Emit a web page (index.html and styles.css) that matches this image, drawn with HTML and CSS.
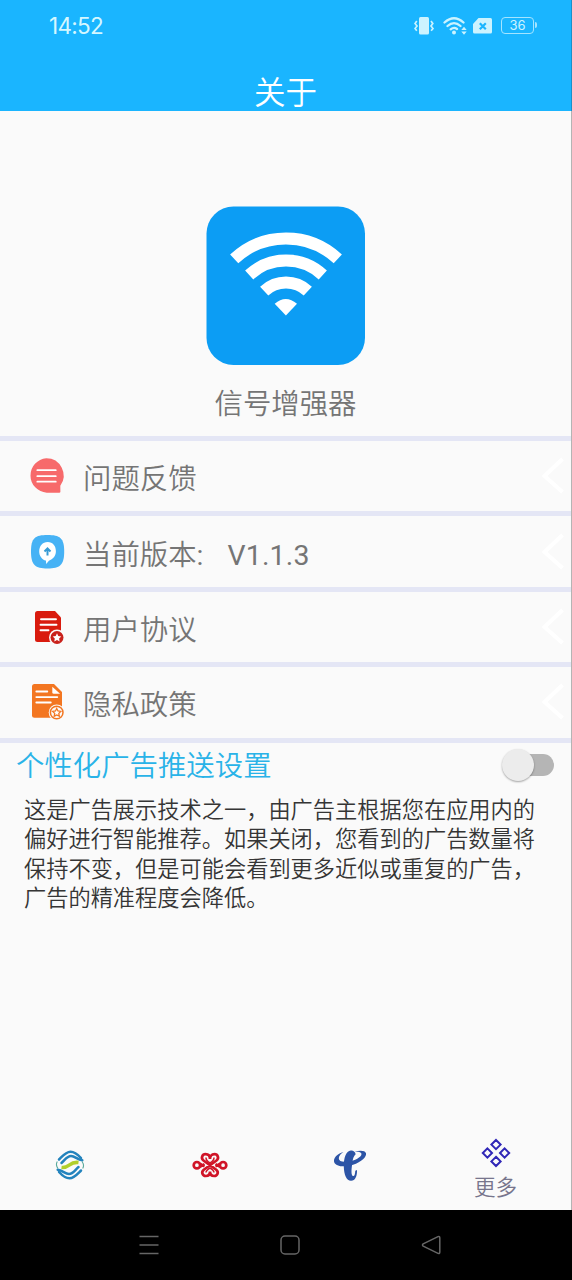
FILE: index.html
```html
<!DOCTYPE html>
<html lang="zh-CN">
<head>
<meta charset="utf-8">
<title>关于</title>
<link rel="stylesheet" href="styles.css">
</head>
<body>
<div class="screen">
  <header class="header">
    <div class="status">
      <span class="time">14:52</span>
      <div class="status-icons">
        <svg class="vibrate" width="20" height="18" viewBox="0 0 20 18"><rect x="5" y="0" width="10" height="17.500" rx="1.500" fill="currentColor"/><path d="M2.800 4 1 6.500 3 9 1 11.500l1.800 2.200M17 4l1.800 2.500L17 9l2 2.500-1.900 2.200" fill="none" stroke="currentColor" stroke-width="1.700"/></svg>
        <svg class="wifi" width="24" height="18" viewBox="0 0 24 18"><g fill="none" stroke="currentColor" stroke-width="2.300" stroke-linecap="round"><path d="M1.500 5.500Q11 -3 20.500 5.500M4.500 9Q11 3.200 17.500 9M7.700 12.300Q11 9.500 14 12"/></g><circle cx="11" cy="15.500" r="2" fill="currentColor"/><path d="M18.300 13 21 9.800l2.700 3.200ZM18.300 14.500 21 17.700l2.700-3.200Z" fill="currentColor"/></svg>
        <svg class="sim" width="19" height="16" viewBox="0 0 19 16"><path d="M5.500 0H17.500Q19 0 19 1.500V14Q19 15.500 17.500 15.500H1.500Q0 15.500 0 14V6Z" fill="currentColor"/><path d="m6.800 5.200 6 6m0-6-6 6" stroke="#1ab5ff" stroke-width="2.200"/></svg>
        <div class="battery">36</div>
      </div>
    </div>
    <h1 class="title">关于</h1>
  </header>

  <main class="content">
    <section class="hero">
      <svg class="app-logo" width="160" height="160" viewBox="0 0 160 160">
        <rect x=".5" y=".5" width="158.500" height="158.500" rx="27" fill="#0c9df4"/>
        <g fill="none" stroke="#fff" stroke-width="12"><path d="M28.200 52.900A76 76 0 0 1 131.800 52.900M43.200 69A54 54 0 0 1 116.800 69M58.200 85.100A32 32 0 0 1 101.800 85.100"/></g>
        <path d="M68.700 97.800Q79.700 88 91 97.800L79.900 109.500Z" fill="#fff"/>
      </svg>
      <div class="app-name">信号增强器</div>
    </section>

    <ul class="menu">
      <li class="row">
        <svg class="row-icon" width="40" height="40" viewBox="0 0 40 40"><path d="M19.600 2.500a17.300 17.300 0 0 1 14 27.500l.1 6Q33.700 37 32.500 37L20 37a17.300 17.300 0 0 1-.4-34.500Z" transform="translate(-.3 -.3)" fill="#f76a6b"/><path d="M10.300 14.200h18.500M10.300 20.200h18.500M10.300 25.700h18.500" stroke="#fff" stroke-width="1.700" stroke-linecap="round"/></svg>
        <span class="row-text">问题反馈</span>
        <svg class="chevron" width="26" height="40" viewBox="0 0 26 40"><path d="M22.500 3 4.500 20l18 16" fill="none" stroke="#fff" stroke-width="4"/></svg>
      </li>
      <li class="row">
        <svg class="row-icon" width="40" height="40" viewBox="0 0 40 40"><path d="M20.500 3C33 3 37.200 6 37.200 19.500S33 36.500 20.500 36.500 4 33 4 19.500 8 3 20.500 3Z" fill="#46b2f5"/><path d="M20.700 10c5.200 0 8.200 4 8.200 9.300 0 4.500-3 8.200-7 9.400L19.200 32l-.3-3.400c-4-1-6.700-4.800-6.700-9.200C12.200 14 15.500 10 20.700 10Z" fill="#fff"/><path d="M20.500 16.800v6.700M17.500 19.500l3-3 3 3" stroke="#379bd5" stroke-width="2" fill="none"/></svg>
        <span class="row-text">当前版本<span class="latin">:</span></span><span class="row-text latin version">V1.1.3</span>
        <svg class="chevron" width="26" height="40" viewBox="0 0 26 40"><path d="M22.500 3 4.500 20l18 16" fill="none" stroke="#fff" stroke-width="4"/></svg>
      </li>
      <li class="row">
        <svg class="row-icon" width="40" height="40" viewBox="0 0 40 40"><path d="M10.500 4H28l6 6.500V35H10.500Q8 35 8 32.500v-26Q8 4 10.500 4Z" fill="#d91b0e"/><path d="M14 12.200h15M13.500 17.700h16M13.500 23.300h8" stroke="#fff" stroke-width="1.900" stroke-linecap="round"/><circle cx="30" cy="30.500" r="8" fill="#fafafa"/><circle cx="30" cy="30.500" r="6.500" fill="#c9211b"/><path d="m30 26.300 1.300 2.700 3 .4-2.200 2.100.5 3-2.600-1.400-2.700 1.400.5-3-2.100-2.100 3-.4Z" fill="#fff"/></svg>
        <span class="row-text">用户协议</span>
        <svg class="chevron" width="26" height="40" viewBox="0 0 26 40"><path d="M22.500 3 4.500 20l18 16" fill="none" stroke="#fff" stroke-width="4"/></svg>
      </li>
      <li class="row">
        <svg class="row-icon" width="40" height="40" viewBox="0 0 40 40"><path d="M7.500 2H27l8 8v25.800H7.500Q5 35.800 5 33.300V4.500Q5 2 7.500 2Z" fill="#f37621"/><path d="M25.300 4.800v5.500q0 1.500 1.500 1.500h6.300Z" fill="#fff"/><path d="M9.300 9.500h11M9.300 15.100h21M9.300 20.500h14.500" stroke="#fff" stroke-width="1.800" stroke-linecap="round"/><circle cx="29.700" cy="30.500" r="8" fill="#fafafa"/><circle cx="29.700" cy="30.500" r="6.300" fill="none" stroke="#f37621" stroke-width="1.500"/><path d="m29.700 26.500 1.300 2.500 2.800.4-2 2 .5 2.800-2.600-1.300-2.500 1.300.5-2.800-2-2 2.800-.4Z" fill="#fff" stroke="#f37621" stroke-width="1.300"/></svg>
        <span class="row-text">隐私政策</span>
        <svg class="chevron" width="26" height="40" viewBox="0 0 26 40"><path d="M22.500 3 4.500 20l18 16" fill="none" stroke="#fff" stroke-width="4"/></svg>
      </li>
    </ul>

    <section class="ads">
      <div class="ads-head">
        <h2 class="ads-title">个性化广告推送设置</h2>
        <div class="switch"><div class="thumb"></div></div>
      </div>
      <p class="ads-text">这是广告展示技术之一，由广告主根据您在应用内的<br>偏好进行智能推荐。如果关闭，您看到的广告数量将<br>保持不变，但是可能会看到更多近似或重复的广告，<br>广告的精准程度会降低。</p>
    </section>

    <nav class="tabs">
      <div class="tab">
        <svg width="32" height="32" viewBox="0 0 32 32">
          <defs>
            <g id="wave" fill="none" stroke="#2383bd" stroke-linecap="round">
              <path d="M5 10.500C9 6.500 12 2.700 16.500 2.700c4 0 7.500 3 10.500 6.300" stroke-width="2.500"/>
              <path d="M7.500 14C11 11 13 7 17 7c4 0 6 3.500 11.300 4.300" stroke-width="2.500"/>
            </g>
          </defs>
          <use href="#wave"/>
          <use href="#wave" transform="rotate(180 16 16)"/>
          <path d="M7.500 18.500C15.500 19.500 15 12.300 24.500 13.500" fill="none" stroke="#b1cf2c" stroke-width="3.600"/>
          <path d="M3.300 12.500c-1.500 2.500-.8 5 .7 7M28.700 19.500c1.500-2.500.8-5-.7-7" fill="none" stroke="#5aaa9c" stroke-width="1.100"/>
        </svg>
      </div>
      <div class="tab">
        <svg width="36" height="28" viewBox="0 0 36 28"><g fill="none" stroke="#d01427" stroke-width="2.700"><circle cx="4.900" cy="14.200" r="3.200"/><circle cx="31.100" cy="14.200" r="3.200"/><path d="M18 14.200 11.500 9.500C8.500 7 10.300 3.200 13.500 3.200c3 0 4.500 2 4.500 4.800 0-2.800 1.500-4.800 4.500-4.800 3.200 0 5 3.800 2 6.300L11.800 18.700c-3 2.500-1.200 6.300 2 6.300 2.700 0 4.200-2 4.200-4.500 0 2.500 1.500 4.500 4.200 4.500 3.200 0 5-3.800 2-6.300Z"/><path d="m8 12.500 4.500 3M8 16l4.500-3M28 12.500l-4.500 3M28 16l-4.500-3" stroke-width="2.300"/><path d="M14 6.500q-.2 3 4 5.500 4.200-2.500 4-5.500M14 21.500q0-2 4-4.500 4 2.500 4 4.500" stroke-width="1.500"/></g></svg>
      </div>
      <div class="tab">
        <svg width="34" height="33" viewBox="0 0 34 33"><path d="M10.500 3C4 4.500 0 9.500 1.200 13.200c1.700 4.500 10.500 5.300 18.800 2.600C28.500 13 34 7.500 33 4.200 32.200 1.300 27 1 21.500 2.700c4-.2 7 .3 7 2.300 0 3.300-7 6.700-13 7.500-6 .8-9.700 0-9.700-3.200 0-2.300 2.200-4.800 4.700-6.300Z" fill="#2c54a6"/><path d="M22.700 5.300C22 2.500 20 1.300 17.800 1.600 13 2 10.600 9 10.800 17.500 11 26 13.500 31.700 18 31.800c4.200.1 6.300-5 6-10.800l-1.700.7c-.3 3.600-.8 5.600-2.200 5.300-2-.4-1.800-5.700-1-11.500C19.700 10 20.500 7.500 22.700 5.300Z" fill="#2c54a6"/></svg>
      </div>
      <div class="tab active">
        <svg width="30" height="30" viewBox="0 0 30 30"><path d="m15 2 4.600 4.600L15 11.200l-4.600-4.600ZM6.400 10.400 11 15l-4.600 4.600L1.800 15ZM23.600 10.400l4.600 4.600-4.600 4.600L19 15ZM15 18.800l4.600 4.600L15 28l-4.600-4.600Z" fill="none" stroke="#3027b7" stroke-width="2"/></svg>
        <span class="tab-label">更多</span>
      </div>
    </nav>
  </main>

  <footer class="system-nav">
    <svg width="20" height="22" viewBox="0 0 20 22"><path d="M.5 2.500h19M.5 11h19M.5 19.500h19"/></svg>
    <svg width="20" height="22" viewBox="0 0 20 22"><rect x="1" y="2" width="18" height="18" rx="4"/></svg>
    <svg width="20" height="22" viewBox="0 0 20 22"><path d="M17 2.600 2.200 9.900Q.8 11 2.200 12.100L17 19.400q1.800.5 1.800-1.400V4q0-1.900-1.800-1.400Z"/></svg>
  </footer>
</div>
</body>
</html>
```
FILE: styles.css
```css
* { box-sizing: border-box; }
body {
  margin: 0;
  font-family: Roboto, "Noto Sans CJK SC", sans-serif;
  font-weight: 350;
}
h1, h2, p, ul { margin: 0; padding: 0; font-weight: 350; }
svg { display: block; flex: none; }
.screen {
  width: 572px;
  height: 1280px;
  display: flex;
  flex-direction: column;
  overflow: hidden;
  background: #fafafa;
}
.header {
  height: 111px;
  flex: none;
  background: #1ab5ff;
  color: #fff;
  border-right: 1px solid #1a91ca;
}
.status {
  height: 51px;
  padding: 0 37px 0 49px;
  display: flex;
  align-items: center;
  justify-content: space-between;
}
.time {
  font: 400 22.500px/30px Inter, sans-serif;
  letter-spacing: -.7px;
  color: #d5f7ff;
}
.status-icons {
  display: flex;
  align-items: center;
  color: #ccf3ff;
}
.wifi { margin-left: 9px; }
.sim { margin-left: 6px; }
.battery {
  position: relative;
  width: 33px;
  height: 17px;
  margin-left: 9px;
  border: 1.500px solid #a4e4ff;
  border-radius: 4px;
  font: 400 13px/15px Inter, sans-serif;
  text-align: center;
}
.battery::after {
  content: "";
  position: absolute;
  right: -4px;
  top: 4px;
  width: 2px;
  height: 6px;
  border-radius: 0 2px 2px 0;
  background: #a4e4ff;
}
.title {
  padding-top: 20px;
  font-size: 31.500px;
  line-height: 46px;
  text-align: center;
}
.content {
  flex: 1;
  display: flex;
  flex-direction: column;
  border-right: 1px solid #b4b4b4;
}
.hero {
  height: 325px;
  padding-top: 95px;
  display: flex;
  flex-direction: column;
  align-items: center;
}
.app-name {
  margin-top: 18px;
  font-size: 28.400px;
  line-height: 42px;
  color: #757575;
}
.menu {
  list-style: none;
  border-bottom: 5px solid #e4e6f5;
}
.row {
  height: 75.400px;
  padding: 0 5px 0 27px;
  display: flex;
  align-items: center;
  border-top: 5px solid #e4e6f5;
  font-size: 28.400px;
  line-height: 42px;
  color: #757575;
}
.row-icon { margin-right: 16px; }
.row-text { padding-top: 8px; }
.latin { font-weight: 400; }
.version { margin-left: 24px; letter-spacing: .2px; }
.chevron { margin-left: auto; }
.ads-head {
  height: 44px;
  padding: 0 17px 0 16px;
  display: flex;
  align-items: center;
  justify-content: space-between;
}
.ads-title {
  padding-top: 4px;
  font-size: 28.400px;
  line-height: 40px;
  color: #29b3e8;
}
.switch {
  position: relative;
  width: 46px;
  height: 22px;
  border-radius: 11px;
  background: #b5b5b5;
}
.thumb {
  position: absolute;
  left: -6px;
  top: -5px;
  width: 32px;
  height: 32px;
  border-radius: 50%;
  background: #ececec;
  box-shadow: 0 1px 2px rgba(0, 0, 0, .35);
}
.ads-text {
  padding: 9px 0 0 24px;
  font-size: 22.220px;
  line-height: 29.500px;
  white-space: nowrap;
  color: #353535;
}
.tabs {
  height: 90px;
  margin-top: auto;
  display: grid;
  grid-template-columns: 140px 140px 140px 1fr;
}
.tab {
  display: flex;
  flex-direction: column;
  align-items: center;
  justify-content: center;
}
.tab.active { justify-content: flex-start; padding-top: 18px; }
.tab-label {
  margin-top: 5px;
  font-size: 21.500px;
  line-height: 30px;
  color: #77758c;
}
.system-nav {
  height: 70px;
  padding: 0 131px 0 139px;
  display: flex;
  align-items: center;
  justify-content: space-between;
  background: #000;
}
.system-nav svg { fill: none; stroke: #666; stroke-width: 1.500; }
```
